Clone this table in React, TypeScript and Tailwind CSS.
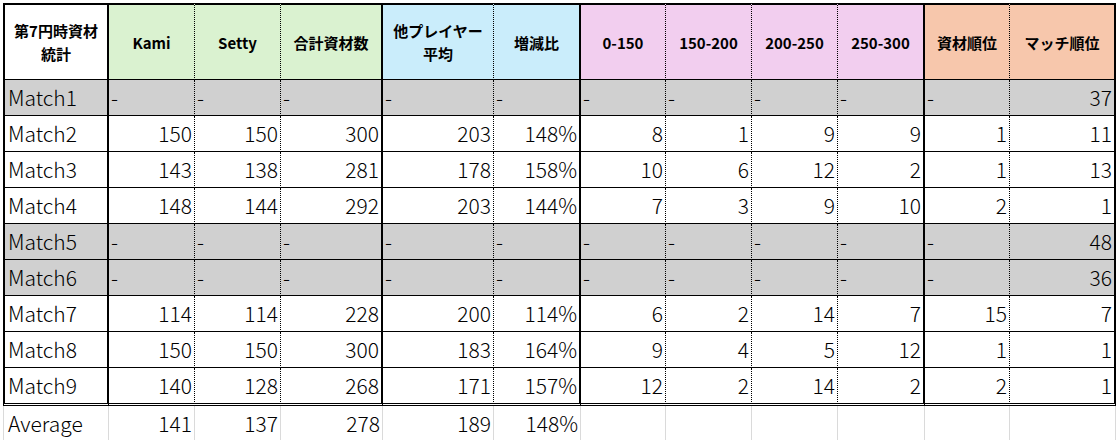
import React from "react";

const COLS = [106, 86, 86, 102, 111, 87, 85, 86, 86, 87, 85, 106];

// right border of each column: thick at group edges, dotted inside groups
const THICK = "border-r-2 border-r-black";
const DOT = "border-r border-r-black [border-right-style:dotted]";
const RIGHT = [THICK, DOT, DOT, THICK, DOT, THICK, DOT, DOT, DOT, THICK, DOT, THICK];

const HEAD_BG = [
  "bg-white",
  "bg-[#daf2d0]",
  "bg-[#daf2d0]",
  "bg-[#daf2d0]",
  "bg-[#caedfb]",
  "bg-[#caedfb]",
  "bg-[#f2ceef]",
  "bg-[#f2ceef]",
  "bg-[#f2ceef]",
  "bg-[#f2ceef]",
  "bg-[#f7c7ac]",
  "bg-[#f7c7ac]",
];

const headers: React.ReactNode[] = [
  <>
    第7円時資材
    <br />
    統計
  </>,
  "Kami",
  "Setty",
  "合計資材数",
  <>
    他プレイヤー
    <br />
    平均
  </>,
  "増減比",
  "0-150",
  "150-200",
  "200-250",
  "250-300",
  "資材順位",
  "マッチ順位",
];

type Row = { name: string; vals: string[] | null; last: string };

const rows: Row[] = [
  { name: "Match1", vals: null, last: "37" },
  { name: "Match2", vals: ["150", "150", "300", "203", "148%", "8", "1", "9", "9", "1"], last: "11" },
  { name: "Match3", vals: ["143", "138", "281", "178", "158%", "10", "6", "12", "2", "1"], last: "13" },
  { name: "Match4", vals: ["148", "144", "292", "203", "144%", "7", "3", "9", "10", "2"], last: "1" },
  { name: "Match5", vals: null, last: "48" },
  { name: "Match6", vals: null, last: "36" },
  { name: "Match7", vals: ["114", "114", "228", "200", "114%", "6", "2", "14", "7", "15"], last: "7" },
  { name: "Match8", vals: ["150", "150", "300", "183", "164%", "9", "4", "5", "12", "1"], last: "1" },
  { name: "Match9", vals: ["140", "128", "268", "171", "157%", "12", "2", "14", "2", "2"], last: "1" },
];

const average = ["141", "137", "278", "189", "148%"];

const font = { fontFamily: '"Noto Sans CJK JP", "Noto Sans", sans-serif' };

export default function App() {
  return (
    <div className="w-[1116px] h-[440px] overflow-hidden bg-white pl-[3px] pt-[3px] text-black" style={font}>
      <div
        className="grid"
        style={{ gridTemplateColumns: COLS.map((w) => `${w}px`).join(" ") }}
      >
        {/* header */}
        {headers.map((h, i) => (
          <div
            key={"h" + i}
            className={`h-[77px] border-t-2 border-t-black border-b border-b-black flex items-center justify-center text-center text-[15px] leading-[23px] font-bold ${HEAD_BG[i]} ${RIGHT[i]} ${i === 0 ? "border-l-2 border-l-black" : ""}`}
          >
            <span>{h}</span>
          </div>
        ))}

        {/* match rows */}
        {rows.map((r, ri) => {
          const isLast = ri === rows.length - 1;
          const gray = !r.vals;
          const bottom = isLast
            ? "h-[38px] border-b-[3px] border-b-black [border-bottom-style:double]"
            : "h-[36px] border-b border-b-black";
          const bg = gray ? "bg-[#d0d0d0]" : "bg-white";
          return (
            <React.Fragment key={r.name}>
              <div
                className={`${bottom} ${bg} ${RIGHT[0]} border-l-2 border-l-black flex items-center pl-[3px] text-[21px] font-light`}
              >
                {r.name}
              </div>
              {Array.from({ length: 10 }).map((_, ci) => {
                const v = r.vals ? r.vals[ci] : null;
                return (
                  <div
                    key={ci}
                    className={`${bottom} ${bg} ${RIGHT[ci + 1]} flex items-center text-[21px] font-light ${v ? "justify-end pr-[2px]" : "pl-[2px]"}`}
                  >
                    {v ?? "-"}
                  </div>
                );
              })}
              <div
                className={`${bottom} ${bg} ${RIGHT[11]} flex items-center justify-end pr-[2px] text-[21px] font-light`}
              >
                {r.last}
              </div>
            </React.Fragment>
          );
        })}

        {/* average row */}
        <div className="h-[35px] border-l border-r border-[#dadada] flex items-center pl-[4px] text-[21px] font-light">
          Average
        </div>
        {COLS.slice(1).map((_, ci) => (
          <div
            key={"a" + ci}
            className="h-[35px] border-r border-[#dadada] flex items-center justify-end pr-[2px] text-[21px] font-light"
          >
            {average[ci] ?? ""}
          </div>
        ))}
      </div>
    </div>
  );
}
